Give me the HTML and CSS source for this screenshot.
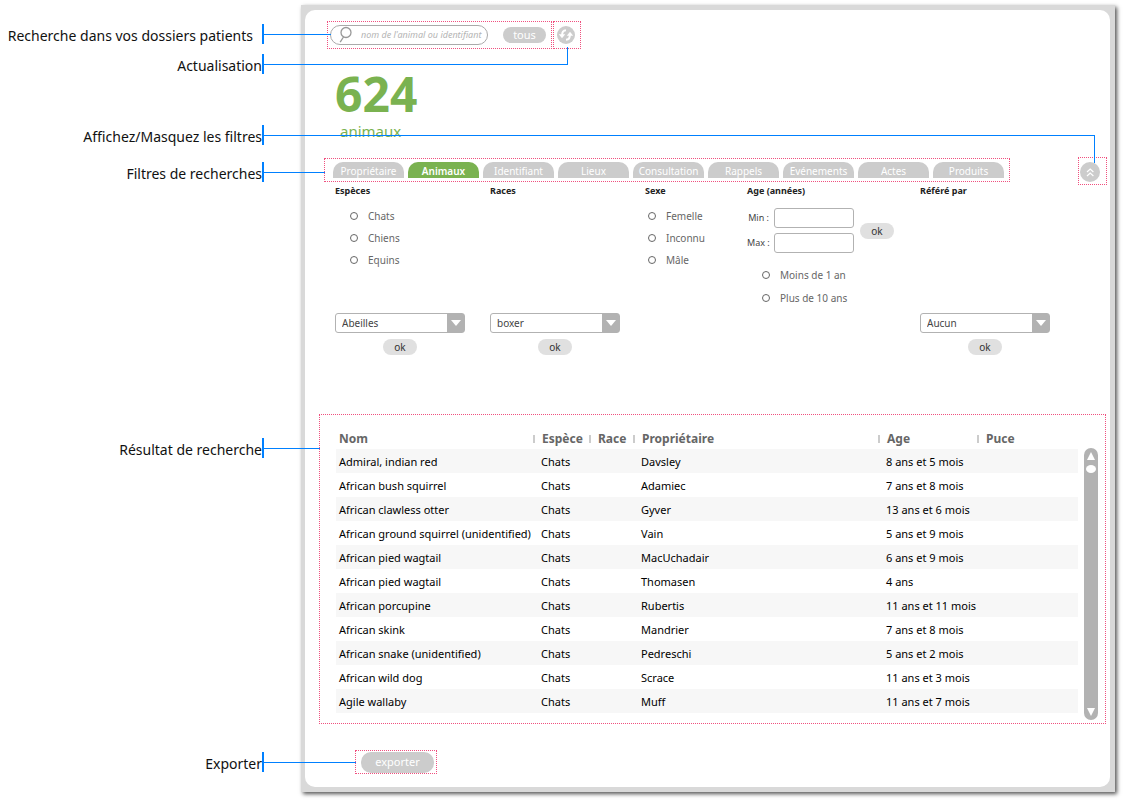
FILE: index.html
```
<!DOCTYPE html>
<html lang="fr">
<head>
<meta charset="utf-8">
<title>Recherche animaux</title>
<link rel="stylesheet" href="styles.css">
</head>
<body>
<div class="sheet">
  <aside class="notes">
    <p class="note note-search">Recherche dans vos dossiers patients</p>
    <p class="note note-refresh">Actualisation</p>
    <p class="note note-toggle">Affichez/Masquez les filtres</p>
    <p class="note note-filters">Filtres de recherches</p>
    <p class="note note-results">Résultat de recherche</p>
    <p class="note note-export">Exporter</p>
  </aside>
  <div class="window">
    <main class="panel">
      <span class="line line-toggle"></span>
      <div class="toolbar">
        <form class="frame search">
          <span class="line line-search"></span>
          <div class="search-box">
            <svg class="search-icon" viewBox="0 0 14 18" aria-hidden="true"><circle cx="7" cy="6.500" r="5"/><path d="M4.500 11 1.200 16.200"/></svg>
            <input class="search-input" type="text" aria-label="Recherche" placeholder="nom de l'animal ou identifiant">
          </div>
          <button class="pill-dark" type="button">tous</button>
        </form>
        <div class="frame refresh">
          <span class="line line-refresh"></span>
          <button class="round refresh-button" type="button" aria-label="Actualiser">
            <svg viewBox="0 0 18 18" aria-hidden="true"><path class="arc" d="M5.200 9C5 6 6.500 4.400 9 4.200"/><path class="tip" d="M1.800 8.300h6.400L5 12.300z"/><path class="arc" d="M12.800 9C13 12 11.500 13.600 9 13.800"/><path class="tip" d="M9.800 9.700h6.400L13 5.700z"/></svg>
          </button>
        </div>
      </div>
      <div class="count"><strong class="count-value">624</strong><span class="count-label">animaux</span></div>
      <div class="tab-row">
        <nav class="frame tabs">
          <span class="line line-tabs"></span>
          <button class="tab" type="button">Propriétaire</button>
          <button class="tab tab-active" type="button">Animaux</button>
          <button class="tab" type="button">Identifiant</button>
          <button class="tab" type="button">Lieux</button>
          <button class="tab" type="button">Consultation</button>
          <button class="tab" type="button">Rappels</button>
          <button class="tab" type="button">Evénements</button>
          <button class="tab" type="button">Actes</button>
          <button class="tab" type="button">Produits</button>
        </nav>
        <div class="frame toggle">
          <button class="round toggle-button" type="button" aria-label="Masquer les filtres">
            <svg viewBox="0 0 20 20" aria-hidden="true"><path d="M7 10l3.200-3 3.200 3M7 14l3.200-3 3.200 3"/></svg>
          </button>
        </div>
      </div>
      <div class="filters">
        <section class="filter">
          <h2>Espèces</h2>
          <div class="options options-wide">
            <label><input type="radio" name="espece">Chats</label>
            <label><input type="radio" name="espece">Chiens</label>
            <label><input type="radio" name="espece">Equins</label>
          </div>
          <div class="picker">
            <div class="select"><select aria-label="Espèces"><option>Abeilles</option></select></div>
            <button class="pill" type="button">ok</button>
          </div>
        </section>
        <section class="filter">
          <h2>Races</h2>
          <div class="picker">
            <div class="select"><select aria-label="Races"><option>boxer</option></select></div>
            <button class="pill" type="button">ok</button>
          </div>
        </section>
        <section class="filter">
          <h2>Sexe</h2>
          <div class="options">
            <label><input type="radio" name="sexe">Femelle</label>
            <label><input type="radio" name="sexe">Inconnu</label>
            <label><input type="radio" name="sexe">Mâle</label>
          </div>
        </section>
        <section class="filter">
          <h2>Age (années)</h2>
          <div class="range">
            <div class="range-fields">
              <label for="min">Min :</label><input id="min" type="text">
              <label for="max">Max :</label><input id="max" type="text">
            </div>
            <button class="pill" type="button">ok</button>
          </div>
          <div class="options options-age">
            <label><input type="radio" name="age">Moins de 1 an</label>
            <label><input type="radio" name="age">Plus de 10 ans</label>
          </div>
        </section>
        <section class="filter">
          <h2>Référé par</h2>
          <div class="picker">
            <div class="select"><select aria-label="Référé par"><option>Aucun</option></select></div>
            <button class="pill" type="button">ok</button>
          </div>
        </section>
      </div>
      <section class="frame results">
        <span class="line line-results"></span>
        <div class="table-view">
          <table>
            <colgroup><col class="c-nom"><col class="c-espece"><col class="c-race"><col class="c-prop"><col class="c-age"><col></colgroup>
            <thead><tr><th>Nom</th><th>Espèce</th><th>Race</th><th>Propriétaire</th><th>Age</th><th>Puce</th></tr></thead>
            <tbody>
              <tr><td>Admiral, indian red</td><td>Chats</td><td></td><td>Davsley</td><td>8 ans et 5 mois</td><td></td></tr>
              <tr><td>African bush squirrel</td><td>Chats</td><td></td><td>Adamiec</td><td>7 ans et 8 mois</td><td></td></tr>
              <tr><td>African clawless otter</td><td>Chats</td><td></td><td>Gyver</td><td>13 ans et 6 mois</td><td></td></tr>
              <tr><td>African ground squirrel (unidentified)</td><td>Chats</td><td></td><td>Vain</td><td>5 ans et 9 mois</td><td></td></tr>
              <tr><td>African pied wagtail</td><td>Chats</td><td></td><td>MacUchadair</td><td>6 ans et 9 mois</td><td></td></tr>
              <tr><td>African pied wagtail</td><td>Chats</td><td></td><td>Thomasen</td><td>4 ans</td><td></td></tr>
              <tr><td>African porcupine</td><td>Chats</td><td></td><td>Rubertis</td><td>11 ans et 11 mois</td><td></td></tr>
              <tr><td>African skink</td><td>Chats</td><td></td><td>Mandrier</td><td>7 ans et 8 mois</td><td></td></tr>
              <tr><td>African snake (unidentified)</td><td>Chats</td><td></td><td>Pedreschi</td><td>5 ans et 2 mois</td><td></td></tr>
              <tr><td>African wild dog</td><td>Chats</td><td></td><td>Scrace</td><td>11 ans et 3 mois</td><td></td></tr>
              <tr><td>Agile wallaby</td><td>Chats</td><td></td><td>Muff</td><td>11 ans et 7 mois</td><td></td></tr>
            </tbody>
          </table>
        </div>
        <div class="scrollbar" aria-hidden="true">
          <div><span class="arrow-up"></span><span class="thumb"></span></div>
          <span class="arrow-down"></span>
        </div>
      </section>
      <div class="frame export">
        <span class="line line-export"></span>
        <button class="pill-dark export-button" type="button">exporter</button>
      </div>
    </main>
  </div>
</div>
</body>
</html>
```
FILE: styles.css
```
* { box-sizing: border-box; }
body {
  margin: 0;
  background: #fff;
  color: #111;
  font: 11px/16px "Noto Sans", "Open Sans", sans-serif;
}
button, input, select { font: inherit; margin: 0; }
button { border: 0; padding: 0; cursor: pointer; }
h2, p { margin: 0; }

.sheet {
  display: grid;
  grid-template-columns: 264px minmax(0, 1fr);
  column-gap: 37px;
  padding: 5px 9px 9px 0;
}

/* Annotations */
.note {
  border-right: 2px solid #0080ff;
  font-size: 14px;
  line-height: 24px;
  height: 20px;
  text-align: right;
  white-space: nowrap;
}
.note-search { margin-top: 19px; padding-right: 9px; }
.note-refresh { margin-top: 10px; }
.note-toggle { margin-top: 51px; }
.note-filters { margin-top: 17px; }
.note-results { margin-top: 256px; }
.note-export { margin-top: 294px; }

.line { position: absolute; border: 0 solid #0080ff; border-top-width: 1px; pointer-events: none; }
.line-search { left: -64px; top: 12px; width: 67px; }
.line-refresh { right: 12px; top: 25px; width: 304px; height: 18px; border-width: 0 1px 1px 0; }
.line-toggle { left: -41px; right: 15px; top: 125px; height: 28px; border-right-width: 1px; z-index: 1; }
.line-tabs { left: -61px; top: 13px; width: 61px; }
.line-results { left: -56px; top: 33px; width: 56px; }
.line-export { left: -92px; top: 11px; width: 92px; }

/* Window */
.window {
  background: #d9d9d9;
  padding: 5px 5px 5px 4px;
  box-shadow: 2px 2px 4px #555;
}
.panel {
  position: relative;
  background: #fff;
  border-radius: 10px;
  padding: 11px 4px 13px 14px;
}
.frame { position: relative; border: 1px dotted #f0507f; }

/* Toolbar */
.toolbar { display: flex; gap: 1px; padding-left: 8px; }
.search {
  display: flex;
  align-items: center;
  justify-content: space-between;
  width: 225px;
  height: 28px;
  padding: 0 5px 0 2px;
}
.search-box {
  display: flex;
  align-items: center;
  width: 158px;
  height: 20px;
  padding-left: 8px;
  border: 1px solid #aaa;
  border-radius: 10px;
}
.search-icon { width: 14px; height: 18px; fill: none; stroke: #999; stroke-width: 1.3; }
.search-input {
  flex: 1;
  min-width: 0;
  border: 0;
  padding: 0 0 0 8px;
  background: none;
  font-size: 9px;
  font-style: italic;
  outline: 0;
}
.search-input::placeholder { color: #b4b4b4; opacity: 1; }
.pill-dark {
  width: 43px;
  height: 16px;
  border-radius: 10px;
  background: #ccc;
  color: #fff;
  line-height: 16px;
}
.refresh { display: flex; align-items: center; padding-left: 3px; width: 28px; height: 28px; }
.round { border-radius: 50%; background: #ccc; }
.round svg { display: block; }
.refresh-button { width: 18px; height: 18px; }
.refresh-button .arc { fill: none; stroke: #fff; stroke-width: 2; }
.refresh-button .tip { fill: #fff; }

/* Counter */
.count { display: flex; flex-direction: column; padding: 18px 0 0 16px; color: #7ab250; }
.count-value { font-size: 48px; line-height: 54px; }
.count-label { padding-left: 5px; font-size: 15px; line-height: 20px; }

/* Tabs */
.tab-row { display: flex; align-items: flex-start; justify-content: space-between; margin-top: 16px; padding-left: 5px; }
.tabs { display: flex; gap: 4px; height: 24px; margin-top: 1px; padding: 3px 5px 0 8px; }
.tab {
  width: 71px;
  height: 16px;
  border-radius: 10px 10px 0 0;
  background: #ccc;
  color: #fff;
  font-size: 10px;
  line-height: 18px;
}
.tab-active { background: #7ab250; font-weight: 600; }
.toggle { width: 29px; height: 28px; padding: 4px 0 0 1px; margin-right: -1px; }
.toggle-button { width: 20px; height: 20px; }
.toggle-button svg { fill: none; stroke: #fff; stroke-width: 1.2; }

/* Filters */
.filters {
  display: grid;
  grid-template-columns: 155px 155px 102px 173px minmax(130px, 1fr);
  height: 229px;
  padding-left: 16px;
  font-size: 10px;
}
.filter { display: flex; flex-direction: column; height: 170px; color: #666; }
.filter h2 { color: #222; font-size: 9px; line-height: 12px; }
.options { display: flex; flex-direction: column; gap: 6px; padding: 11px 0 0 3px; }
.options-wide { padding-left: 15px; }
.options-age { padding: 14px 0 0 15px; gap: 7px; }
.options label { display: flex; align-items: center; gap: 10px; white-space: nowrap; }
.options input {
  appearance: none;
  width: 8px;
  height: 8px;
  border: 1px solid #666;
  border-radius: 50%;
}
.picker { display: flex; flex-direction: column; align-items: center; gap: 6px; width: 130px; margin-top: auto; }
.select { position: relative; width: 100%; }
.select::after {
  content: "";
  position: absolute;
  right: 4px;
  top: 7px;
  width: 10px;
  height: 6px;
  background: #fff;
  clip-path: polygon(0 0, 100% 0, 50% 100%);
  pointer-events: none;
}
.select select {
  display: block;
  appearance: none;
  width: 100%;
  height: 20px;
  padding: 0 24px 0 6px;
  border: 1px solid #b2b2b2;
  border-radius: 3px;
  color: #444;
  background: linear-gradient(#b2b2b2, #b2b2b2) right / 17px 100% no-repeat, #fff;
}
.pill { width: 34px; height: 16px; border-radius: 8px; background: #e0e0e0; color: #333; line-height: 16px; }
.range { display: flex; align-items: center; gap: 6px; padding-top: 11px; }
.range-fields { display: grid; grid-template-columns: 22px 80px; gap: 5px; align-items: center; color: #444; font-size: 9px; text-align: right; }
.range-fields label { white-space: nowrap; }
.range-fields input { width: 80px; height: 20px; border: 1px solid #b2b2b2; border-radius: 3px; padding: 0 4px; }

/* Results */
.results { display: flex; height: 310px; padding: 14px 7px 3px 16px; }
.table-view { flex: 1; min-width: 0; overflow: hidden; }
table { width: 100%; border-collapse: collapse; table-layout: fixed; }
.c-nom { width: 197px; }
.c-espece { width: 56px; }
.c-race { width: 44px; }
.c-prop { width: 245px; }
.c-age { width: 99px; }
th, td { padding: 0 0 0 8px; text-align: left; white-space: nowrap; }
th:first-child, td:first-child { padding-left: 3px; }
th { height: 20px; color: #666; font-size: 12px; line-height: 20px; }
th + th {
  padding-left: 9px;
  background: linear-gradient(#ccc, #ccc) 0 6px / 2px 8px no-repeat;
}
td { height: 24px; padding-top: 2px; color: #000; }
tbody tr:nth-child(odd) { background: #f7f7f7; }
.scrollbar {
  display: flex;
  flex-direction: column;
  justify-content: space-between;
  width: 14px;
  margin: 19px 0 0 6px;
  padding: 4px 2px;
  border-radius: 7px;
  background: #b2b2b2;
}
.arrow-up, .arrow-down { display: block; width: 8px; height: 8px; margin: 0 auto; background: #fff; }
.arrow-up { clip-path: polygon(50% 0, 100% 100%, 0 100%); }
.arrow-down { clip-path: polygon(0 0, 100% 0, 50% 100%); }
.thumb { display: block; height: 8px; margin-top: 5px; border-radius: 50%; background: #fff; }

/* Export */
.export { display: flex; align-items: center; padding-left: 5px; width: 82px; height: 24px; margin: 26px 0 0 36px; }
.export-button { width: 73px; height: 21px; line-height: 20px; }
```
